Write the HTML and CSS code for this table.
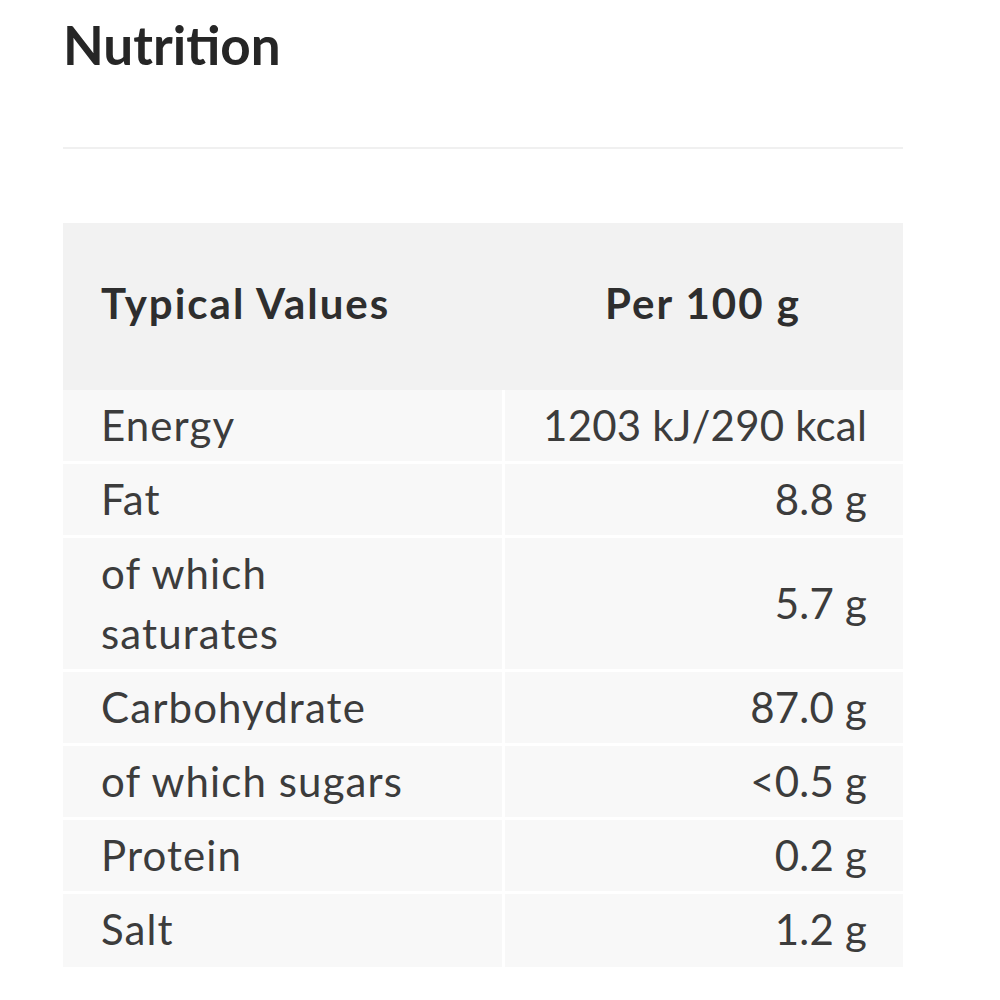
FILE: index.html
```html
<!DOCTYPE html>
<html lang="en">
<head>
<meta charset="utf-8">
<title>Nutrition</title>
<link rel="stylesheet" href="styles.css">
</head>
<body>
<main class="page">
  <h2 class="title">Nutrition</h2>
  <hr class="rule">
  <table class="nutrition">
    <thead>
      <tr>
        <th class="col-name">Typical Values</th>
        <th class="col-value">Per 100 g</th>
      </tr>
    </thead>
    <tbody>
      <tr><td class="name">Energy</td><td class="value">1203 kJ/290 kcal</td></tr>
      <tr><td class="name">Fat</td><td class="value">8.8 g</td></tr>
      <tr><td class="name">of which saturates</td><td class="value">5.7 g</td></tr>
      <tr><td class="name">Carbohydrate</td><td class="value">87.0 g</td></tr>
      <tr><td class="name">of which sugars</td><td class="value">&lt;0.5 g</td></tr>
      <tr><td class="name">Protein</td><td class="value">0.2 g</td></tr>
      <tr><td class="name">Salt</td><td class="value">1.2 g</td></tr>
    </tbody>
  </table>
</main>
</body>
</html>
```

FILE: styles.css
```css
html, body {
  margin: 0;
  padding: 0;
  background: #ffffff;
}

.page {
  width: 840px;
  padding: 0 0 0 63px;
  font-family: Lato, "Open Sans", sans-serif;
  color: #3a3a3a;
}

.title {
  margin: 0;
  padding-top: 15px;
  font-size: 53px;
  line-height: 60px;
  font-weight: 700;
  color: #262626;
}

.rule {
  margin: 72px 0 0 0;
  border: 0;
  height: 2px;
  background: #f0f0f0;
}

.nutrition {
  margin-top: 74px;
  width: 840px;
  border-collapse: collapse;
  table-layout: fixed;
}

.nutrition th,
.nutrition td {
  box-sizing: border-box;
}

.col-name {
  width: 440px;
}

.nutrition th {
  background: #f2f2f2;
  height: 167px;
  padding: 0 38px 8px 38px;
  font-size: 42px;
  letter-spacing: 2px;
  font-weight: 700;
  color: #2e2e2e;
  vertical-align: middle;
}

.nutrition th.col-name {
  text-align: left;
}

.nutrition th.col-value {
  text-align: center;
  padding-left: 0;
  padding-right: 0;
}

.nutrition td {
  background: #f8f8f8;
  border-bottom: 3px solid #ffffff;
  font-size: 42px;
  letter-spacing: 1.1px;
  line-height: 60px;
  padding: 5px 37px 6px 38px;
  color: #3c3c3c;
  vertical-align: middle;
}

.nutrition td.name {
  border-right: 3px solid #ffffff;
  padding-right: 60px;
}

.nutrition td.value {
  text-align: right;
  white-space: nowrap;
  padding-left: 10px;
  padding-right: 36px;
  letter-spacing: 0.2px;
}

.nutrition tbody tr:last-child td {
  padding-bottom: 8px;
}
```
